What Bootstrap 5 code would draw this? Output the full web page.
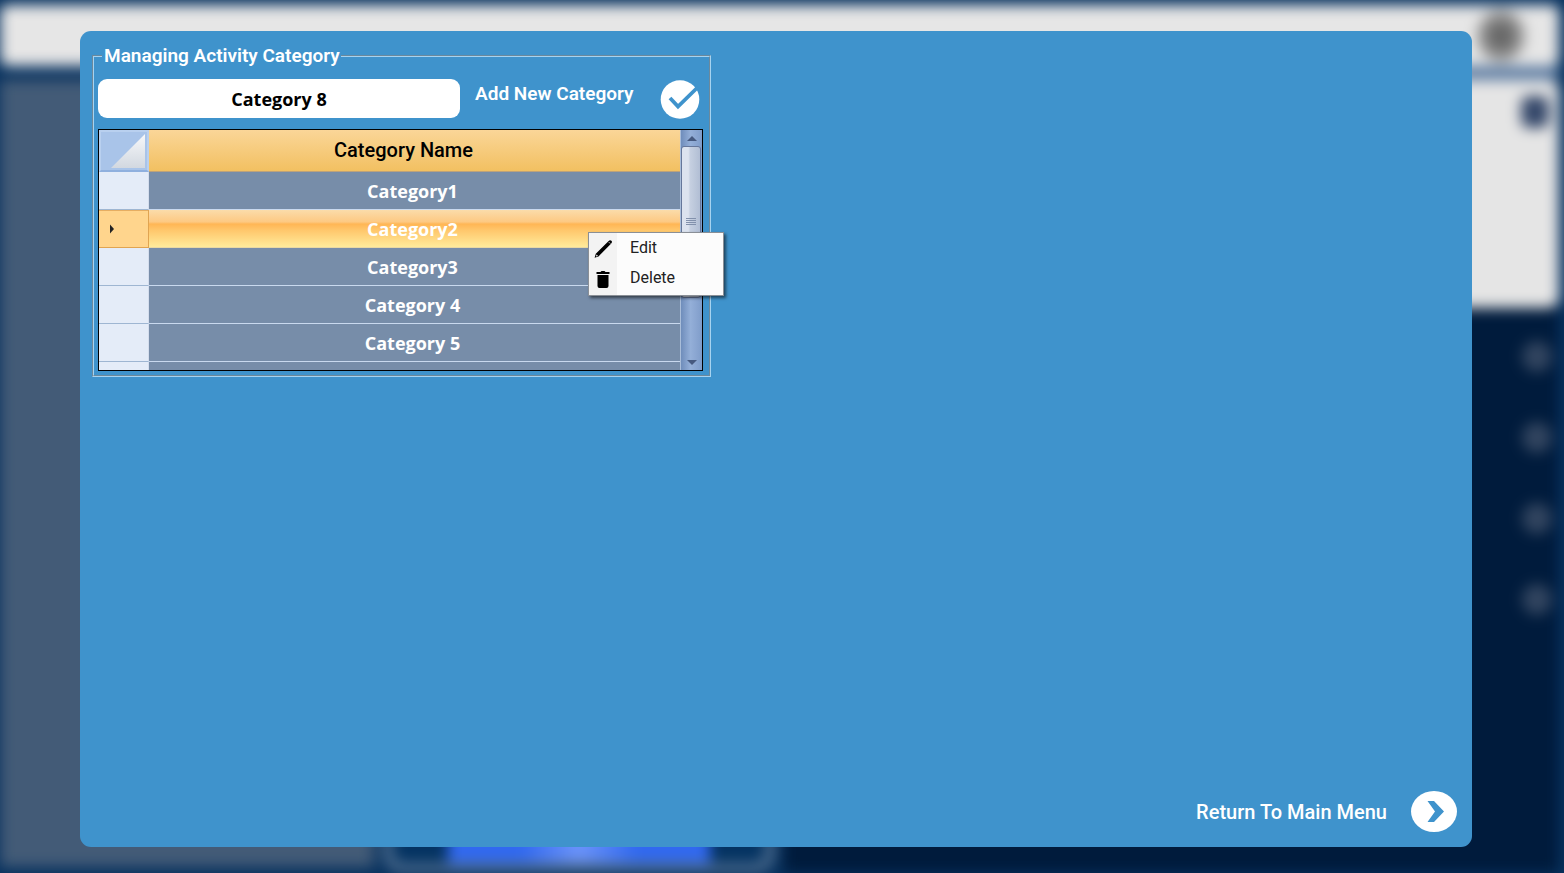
<!DOCTYPE html>
<html lang="en">
<head>
<meta charset="utf-8">
<meta name="viewport" content="width=device-width, initial-scale=1">
<title>Managing Activity Category</title>
<link href="https://cdn.jsdelivr.net/npm/bootstrap@5.3.0/dist/css/bootstrap.min.css" rel="stylesheet">
<style>
  :root { --panel: #3f93cc; }
  body { background: #08325f; font-family: Roboto, "Liberation Sans", sans-serif; }

  /* Dimmed, out-of-focus main screen behind the dialog */
  .backdrop-screen { position: fixed; inset: 0; z-index: 0; overflow: hidden; }
  .screen-soft { filter: blur(7px); padding: 5px 5px 0 0; }
  .screen-head { background: #e6e6e6; height: 61px; border-radius: 8px; padding-right: 34px; }
  .screen-avatar { width: 48px; height: 52px; border-radius: 50%; background: radial-gradient(#5c5c5c 10%, #a0a0a0 70%); }
  .screen-gap { height: 14px; }
  .screen-gap-light { background: #5c7ba1; width: 50%; height: 14px; }
  .screen-left { width: 374px; background: #435b77; margin-bottom: 6px; }
  .screen-mid { width: 392px; margin: 0 9px; }
  .screen-dock { height: 110px; border: 10px solid #4b6a8c; border-radius: 20px; background: #043362; padding: 0 55px; }
  .screen-dock-key { background: linear-gradient(90deg, #3169f0 28%, #6c94fa 50%, #3169f0 72%); height: 90px; }
  .screen-right { background: #001b3c; }
  .screen-card { background: #e5e5e5; height: 228px; border-radius: 10px; padding: 16px 10px; }
  .screen-icon { width: 28px; height: 32px; border-radius: 8px; background: #35486a; }
  .screen-dots { padding: 33px 7px 0; gap: 50px; }
  .screen-dot { width: 30px; height: 31px; border-radius: 50%; background: #31445f; }

  /* Dialog */
  .dialog-wrap { position: relative; z-index: 1; padding: 31px 92px 26px 80px; }
  .dialog-panel { background: var(--panel); border-radius: 11px; padding: 13px 15px 15px 12px; }
  .group-box { width: 100%; max-width: 619px; border: 2px groove #a6d3f0; padding: 11px 6px 4px 4px; }
  .group-box legend { float: none; width: auto; margin: 0 0 0 4px; padding: 0 1px 0 2px; }
  .ui-label { color: #fff; font-weight: 600; font-size: 19px; line-height: 24px; }
  .entry-row { gap: 15px; }
  .name-input { flex: 1 1 auto; width: 0; height: 39px; border: 0; border-radius: 9px; font: 700 18px/24px "Open Sans", "Noto Sans", sans-serif; color: #000; }
  .add-label { width: 163px; margin: 3px 7px 0 0; white-space: nowrap; }
  .round-btn { border: 0; padding: 0; background: none; line-height: 0; }
  .add-btn { margin: 1px 3px 0 0; }

  /* Category grid */
  .grid-frame { position: relative; border: 1px solid #000; margin-top: 10px; }
  .grid-view { height: 240px; overflow: hidden; background: #778da9; }
  .grid-table { width: 100%; table-layout: fixed; border-collapse: separate; border-spacing: 0; text-align: center; }
  .grid-table th, .grid-table td { height: 38px; padding: 0; vertical-align: middle; border-bottom: 1px solid #c9d9ee; }
  .grid-table thead th { height: 42px; }
  .row-head-col { width: 50px; }
  .grid-table .head-name { padding: 0 22px 2px 0; background: linear-gradient(#fad698, #f2c061); color: #000; font-weight: 500; font-size: 20px; border-color: #bda27a; }
  .grid-table .head-corner { background: #a9c4e9; border: 2px solid #b9d0ef; border-bottom-color: #8fb0de; }
  .head-corner svg { display: block; margin: 1px 1px 0 auto; }
  .grid-table tbody th { background: #e4ecf8; border-right: 1px solid #d4dded; border-bottom-color: #9eb6d2; }
  .grid-table tbody td { padding-right: 4px; background: #778da9; color: #fff; font: 700 18px/24px "Open Sans", "Noto Sans", sans-serif; }
  .grid-table tbody tr.is-current td { background: linear-gradient(#fbdcaa 0%, #fdc983 32%, #ffb655 38%, #ffc76c 55%, #ffeb9b 100%); border-color: #ead8a2; }
  .grid-table tbody tr.is-current th { background: #ffd58d; border-color: #e0a451; box-shadow: inset 0 1px #e6ae62; }
  .current-mark { display: block; margin-left: 10px; }
  .scroll-rail { width: 22px; background: linear-gradient(90deg, #6f8dbb, #94afd8 45%, #87a3cf 80%, #7e9cc9); border-left: 1px solid #a9bdd9; }
  .rail-arrow { height: 16px; }
  .rail-thumb { height: 152px; margin: 0 1px 0 0; border: 1px solid #65779b; border-radius: 3px; background: linear-gradient(90deg, #dce3ef 0 35%, #c6d0e1 45%, #b1bed4 100%); }

  /* Context menu */
  .row-menu { position: absolute; top: 102px; right: -22px; z-index: 3; min-width: 0; width: 136px; padding: 0 0 2px; border: 1px solid #8a8f96; border-radius: 0; background: linear-gradient(90deg, #f3f3f3, #f3f3f3 28px, #fcfcfc 28px); box-shadow: 2px 2px 3px rgba(0,0,0,.55); list-style: none; }
  .row-menu button { display: flex; align-items: center; width: 100%; height: 30px; border: 0; background: none; padding: 0 0 0 5px; gap: 16px; font-size: 16px; line-height: 20px; color: #222; }

  .return-btn { gap: 24px; font-size: 20px; font-weight: 500; line-height: 24px; }
</style>
</head>
<body>
<div class="backdrop-screen" aria-hidden="true">
  <div class="screen-soft d-flex flex-column h-100">
    <div class="screen-head d-flex justify-content-end align-items-center flex-shrink-0"><div class="screen-avatar"></div></div>
    <div class="screen-gap d-flex justify-content-end flex-shrink-0"><div class="screen-gap-light"></div></div>
    <div class="d-flex flex-grow-1">
      <div class="screen-left flex-shrink-0"></div>
      <div class="screen-mid d-flex flex-column justify-content-end flex-shrink-0">
        <div class="screen-dock"><div class="screen-dock-key"></div></div>
      </div>
      <div class="screen-right flex-grow-1">
        <div class="screen-card d-flex justify-content-end align-items-start"><div class="screen-icon"></div></div>
        <div class="screen-dots d-flex flex-column align-items-end">
          <div class="screen-dot"></div><div class="screen-dot"></div><div class="screen-dot"></div><div class="screen-dot"></div>
        </div>
      </div>
    </div>
  </div>
</div>

<main class="dialog-wrap d-flex min-vh-100">
  <div class="dialog-panel d-flex flex-column flex-grow-1">
    <fieldset class="group-box">
      <legend class="ui-label">Managing Activity Category</legend>
      <div class="entry-row d-flex align-items-start">
        <input class="name-input text-center" id="categoryName" type="text" value="Category 8">
        <label class="add-label ui-label" for="categoryName">Add New Category</label>
        <button class="round-btn add-btn" type="button" aria-label="Add category">
          <svg width="40" height="39" viewBox="0 0 40 39"><circle cx="20" cy="19.500" r="19.300" fill="#fff"/><path d="M10 18l8 8.500L38 7" fill="none" stroke="#3f93cc" stroke-width="3.800"/></svg>
        </button>
      </div>

      <div class="grid-frame d-flex">
        <div class="grid-view flex-grow-1">
          <table class="grid-table">
            <colgroup><col class="row-head-col"><col></colgroup>
            <thead>
              <tr>
                <th class="head-corner" aria-label="Select all"><svg width="36" height="35" viewBox="0 0 36 35"><defs><linearGradient id="cornerFill" x1="0" y1="0" x2="0" y2="1"><stop offset="0" stop-color="#f7f8fa"/><stop offset="1" stop-color="#d2d8e0"/></linearGradient></defs><path d="M35 0v34H1z" fill="url(#cornerFill)"/></svg></th>
                <th class="head-name" scope="col">Category Name</th>
              </tr>
            </thead>
            <tbody>
              <tr><th></th><td>Category1</td></tr>
              <tr class="is-current"><th><svg class="current-mark" width="6" height="12" viewBox="0 0 6 12"><path d="M1 1.500v9L5 6z" fill="#222"/></svg></th><td>Category2</td></tr>
              <tr><th></th><td>Category3</td></tr>
              <tr><th></th><td>Category 4</td></tr>
              <tr><th></th><td>Category 5</td></tr>
              <tr><th></th><td></td></tr>
            </tbody>
          </table>
        </div>
        <div class="scroll-rail d-flex flex-column flex-shrink-0" aria-hidden="true">
          <div class="rail-arrow d-flex justify-content-center align-items-center"><svg width="10" height="5" viewBox="0 0 10 5"><path d="M0 5l5-5 5 5z" fill="#46597f"/></svg></div>
          <div class="rail-thumb d-flex justify-content-center align-items-center"><svg width="10" height="8" viewBox="0 0 10 8"><path d="M0 .5h10M0 2.500h10M0 4.500h10M0 6.500h10" stroke="#8291ac"/></svg></div>
          <div class="rail-arrow d-flex justify-content-center align-items-center mt-auto"><svg width="10" height="5" viewBox="0 0 10 5"><path d="M0 0l5 5 5-5z" fill="#46597f"/></svg></div>
        </div>
        <ul class="row-menu m-0">
          <li><button type="button"><svg width="20" height="20" viewBox="0 0 20 20"><path d="M.6 19.700l1.200-3.900L14.400 3.200q1.700-1.700 3-.4t-.4 3L4.500 18.400z" fill="#000"/><path d="M1.900 18.600l.7-2 1.400 1.400z" fill="#fff"/><path d="M14.900 4.200l1.300 1.300" stroke="#fff" stroke-width=".8"/></svg>Edit</button></li>
          <li><button type="button"><svg width="20" height="20" viewBox="0 0 20 20"><path d="M2.500 4h4l1-1h3l1 1h4v2h-13zM3.500 7h11v11q0 2-2 2h-7q-2 0-2-2z" fill="#000"/></svg>Delete</button></li>
        </ul>
      </div>
    </fieldset>

    <button class="ui-label return-btn round-btn d-flex align-items-center align-self-end mt-auto" type="button">
      <span>Return To Main Menu</span>
      <svg width="46" height="41" viewBox="0 0 46 41"><ellipse cx="23" cy="20.500" rx="23" ry="20.500" fill="#fff"/><path d="M16.500 10H23L33 20.500 23 31H16.500L24 20.500z" fill="#3f93cc"/></svg>
    </button>
  </div>
</main>
<script src="https://cdn.jsdelivr.net/npm/bootstrap@5.3.0/dist/js/bootstrap.bundle.min.js"></script>
</body>
</html>
